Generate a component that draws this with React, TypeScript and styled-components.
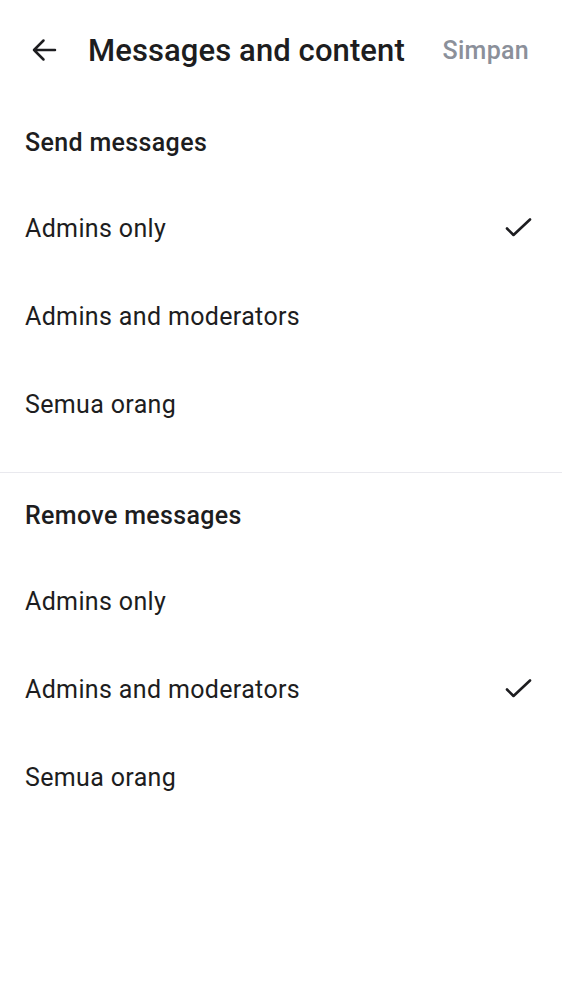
import React, { useState } from "react";
import styled, { createGlobalStyle } from "styled-components";

const Global = createGlobalStyle`
  html, body { margin: 0; padding: 0; background: #ffffff; }
  body { font-family: Roboto, "Noto Sans", "Liberation Sans", sans-serif; color: #1d1d20; }
`;

const Page = styled.div`
  width: 562px;
  min-height: 1000px;
  background: #ffffff;
  display: flex;
  flex-direction: column;
`;

const Header = styled.header`
  height: 100px;
  display: flex;
  align-items: center;
  padding: 0 33px 0 30px;
  box-sizing: border-box;
`;

const BackButton = styled.button`
  width: 28px;
  height: 28px;
  padding: 0;
  border: none;
  background: none;
  display: flex;
  align-items: center;
  justify-content: center;
  color: #1d1d20;
  margin-right: 30px;
`;

const Title = styled.h1`
  flex: 1;
  margin: 0;
  font-size: 31px;
  font-weight: 500;
  letter-spacing: 0.1px;
  color: #1d1d20;
  white-space: nowrap;
`;

const SaveButton = styled.button`
  border: none;
  background: none;
  padding: 0;
  font-family: inherit;
  font-size: 25px;
  font-weight: 500;
  letter-spacing: 0.3px;
  color: #8b909a;
`;

const Section = styled.section<{ $last?: boolean }>`
  display: flex;
  flex-direction: column;
  padding-bottom: ${(p) => (p.$last ? 0 : 24)}px;
  border-bottom: ${(p) => (p.$last ? "none" : "1px solid #e9e9ee")};
`;

const SectionTitle = styled.h2`
  margin: 0;
  height: 84px;
  display: flex;
  align-items: center;
  padding: 0 25px;
  font-size: 25px;
  font-weight: 500;
  letter-spacing: 0.35px;
  color: #1d1d20;
`;

const Option = styled.div`
  height: 88px;
  display: flex;
  align-items: center;
  justify-content: space-between;
  padding: 0 30px 0 25px;
  font-size: 25px;
  font-weight: 400;
  letter-spacing: 0.35px;
  color: #1d1d20;
  cursor: pointer;
`;

const Check = () => (
  <svg width="28" height="20" viewBox="0 0 28 20" fill="none">
    <path d="M3 10.5 L9.5 17 L26 1.5" stroke="#1d1d20" strokeWidth="2.6" strokeLinecap="round" strokeLinejoin="round" />
  </svg>
);

const BackArrow = () => (
  <svg width="26" height="26" viewBox="0 0 26 26" fill="none">
    <path d="M24 13 H3 M12.5 3.5 L3 13 L12.5 22.5" stroke="#1d1d20" strokeWidth="2.5" strokeLinecap="round" strokeLinejoin="round" />
  </svg>
);

const options = ["Admins only", "Admins and moderators", "Semua orang"];

export default function App() {
  const [send, setSend] = useState(0);
  const [remove, setRemove] = useState(1);
  return (
    <Page>
      <Global />
      <Header>
        <BackButton aria-label="Back">
          <BackArrow />
        </BackButton>
        <Title>Messages and content</Title>
        <SaveButton>Simpan</SaveButton>
      </Header>
      <Section>
        <SectionTitle>Send messages</SectionTitle>
        {options.map((o, i) => (
          <Option key={o} onClick={() => setSend(i)}>
            <span>{o}</span>
            {send === i && <Check />}
          </Option>
        ))}
      </Section>
      <Section $last>
        <SectionTitle>Remove messages</SectionTitle>
        {options.map((o, i) => (
          <Option key={o} onClick={() => setRemove(i)}>
            <span>{o}</span>
            {remove === i && <Check />}
          </Option>
        ))}
      </Section>
    </Page>
  );
}
